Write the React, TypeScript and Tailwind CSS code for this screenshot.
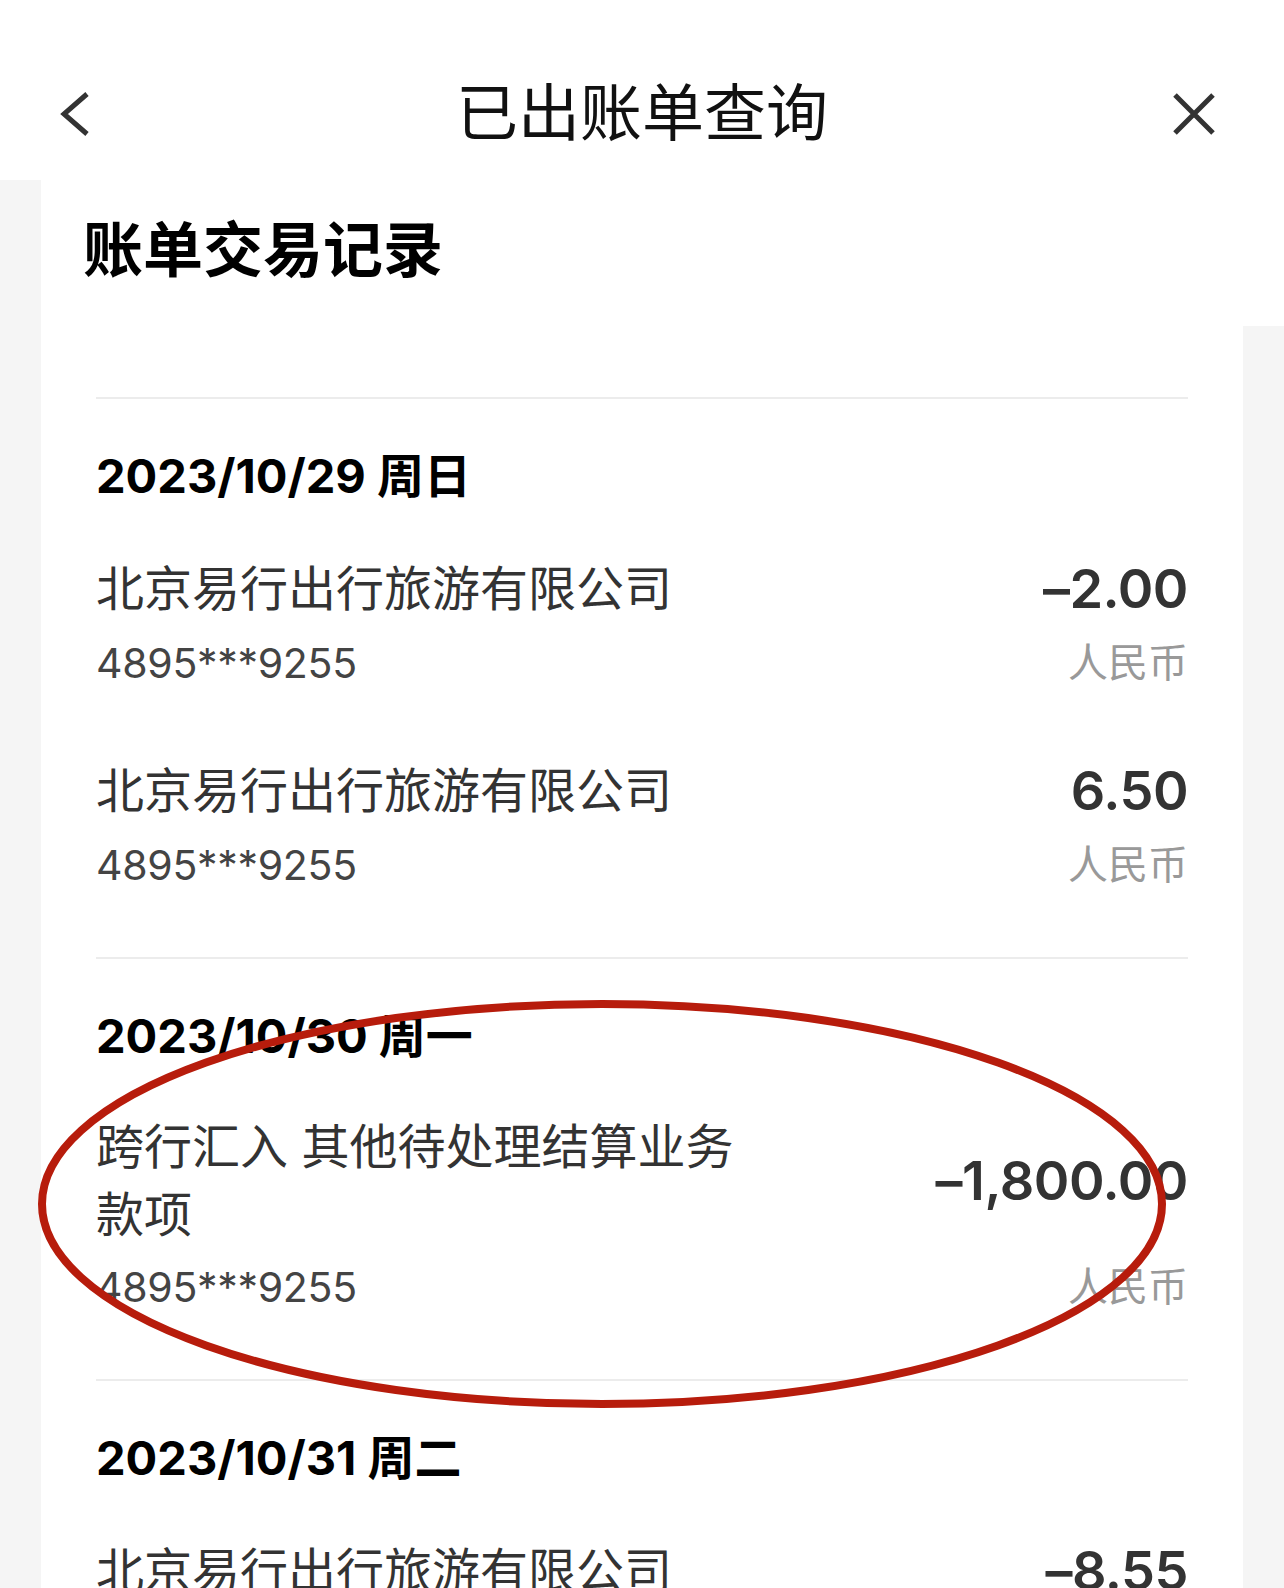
import React from "react";

type Txn = {
  name: string;
  card: string;
  amount: string;
};

type DayGroup = {
  date: string;
  items: Txn[];
};

const groups: DayGroup[] = [
  {
    date: "2023/10/29 周日",
    items: [
      { name: "北京易行出行旅游有限公司", card: "4895***9255", amount: "–2.00" },
      { name: "北京易行出行旅游有限公司", card: "4895***9255", amount: "6.50" },
    ],
  },
  {
    date: "2023/10/30 周一",
    items: [
      { name: "跨行汇入 其他待处理结算业务款项", card: "4895***9255", amount: "–1,800.00" },
    ],
  },
  {
    date: "2023/10/31 周二",
    items: [
      { name: "北京易行出行旅游有限公司", card: "4895***9255", amount: "–8.55" },
    ],
  },
];

const TxnRow = ({ txn }: { txn: Txn }) => {
  const long = txn.name.length > 12;
  return (
    <div className="grid grid-cols-[660px_1fr] pb-[54px]">
      <div
        className={
          long
            ? "text-[48px] leading-[68px] text-[#333333]"
            : "text-[48px] leading-[72px] text-[#333333]"
        }
      >
        {txn.name}
      </div>
      <div className="self-center text-right text-[54px] leading-[64px] font-semibold tracking-[-0.5px] text-[#333333]">
        {txn.amount}
      </div>
      <div className="text-[41px] leading-[76px] tracking-[-0.3px] text-[#444444]">{txn.card}</div>
      <div className="text-right text-[40px] leading-[76px] text-[#999999]">人民币</div>
    </div>
  );
};

export default function App() {
  return (
    <div className="relative h-[1588px] w-[1284px] overflow-hidden bg-[#f5f5f5] [font-family:Inter,'Noto_Sans_CJK_SC',sans-serif]">
      {/* Nav bar */}
      <header className="h-[180px] bg-white pt-[84px]">
        <div className="grid h-[60px] grid-cols-[1fr_auto_1fr] items-center">
          <div className="pl-[60px]">
            <svg width="30" height="48" viewBox="0 0 30 48" fill="none">
              <path d="M27 4 L4 24 L27 44" stroke="#333333" strokeWidth="5" />
            </svg>
          </div>
          <h1 className="text-[62px] leading-[60px] font-normal text-[#111111]">已出账单查询</h1>
          <div className="flex justify-end pr-[68px]">
            <svg width="44" height="44" viewBox="0 0 44 44" fill="none">
              <path d="M3 3 L41 41 M41 3 L3 41" stroke="#333333" strokeWidth="5" />
            </svg>
          </div>
        </div>
      </header>

      <div className="flex">
        <div className="w-[41px] shrink-0" />

        {/* Card */}
        <main className="flex-1 bg-white pt-[40px]">
          <h2 className="mb-[117px] px-[42px] text-[60px] leading-[60px] font-bold text-black">账单交易记录</h2>

          <div className="px-[55px]">
            {groups.map((g) => (
              <section key={g.date}>
                <div className="h-[2px] bg-[#ececec]" />
                <div className="flex h-[154px] items-center text-[47px] font-bold text-black">
                  {g.date}
                </div>
                {g.items.map((t, i) => (
                  <TxnRow key={i} txn={t} />
                ))}
              </section>
            ))}
          </div>
        </main>

        <div className="w-[41px] shrink-0">
          <div className="h-[146px] bg-white" />
        </div>
      </div>

      {/* hand-drawn highlight */}
      <svg
        className="pointer-events-none absolute left-[34px] top-[996px]"
        width="1136"
        height="416"
        viewBox="0 0 1136 416"
        fill="none"
      >
        <ellipse cx="568" cy="208" rx="560" ry="200" stroke="#b71c0c" strokeWidth="8" />
      </svg>
    </div>
  );
}
